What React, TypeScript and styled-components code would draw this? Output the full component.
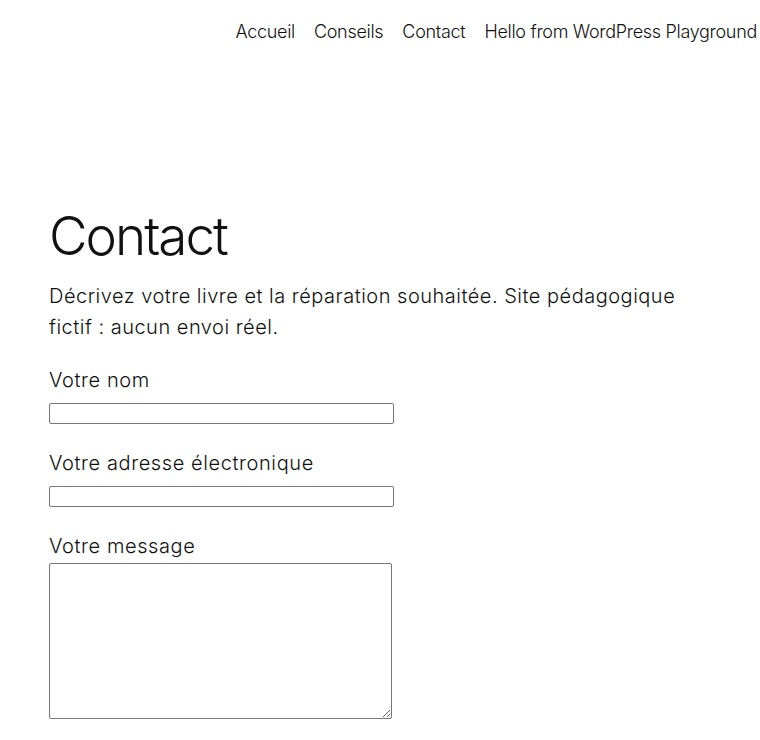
import styled, { createGlobalStyle } from "styled-components";

const GlobalStyle = createGlobalStyle`
  html, body {
    margin: 0;
    padding: 0;
    background: #ffffff;
  }
  body {
    font-family: Inter, "Noto Sans", "Liberation Sans", sans-serif;
    color: #111111;
    overflow-x: hidden;
  }
`;

const Header = styled.header`
  display: flex;
  justify-content: flex-end;
  padding: 20px 3px 0 0;
  height: 60px;
  box-sizing: border-box;
  overflow: hidden;
`;

const NavList = styled.nav`
  display: flex;
  gap: 19px;
  white-space: nowrap;
`;

const NavLink = styled.a`
  font-size: 18px;
  font-weight: 300;
  letter-spacing: -0.3px;
  color: #111111;
  text-decoration: none;
  line-height: 24px;
`;

const Main = styled.main`
  padding: 145px 49px 0;
`;

const Title = styled.h1`
  margin: 0;
  font-size: 53px;
  font-weight: 300;
  letter-spacing: -2px;
  line-height: 1.2;
`;

const Intro = styled.p`
  margin: 12px 0 0;
  max-width: 660px;
  font-size: 20px;
  font-weight: 300;
  letter-spacing: 0.5px;
  line-height: 31px;
`;

const Form = styled.form`
  display: flex;
  flex-direction: column;
  margin-top: 22px;
`;

const Field = styled.div`
  display: flex;
  flex-direction: column;
  align-items: flex-start;
  margin-bottom: ${(p: { $gap?: number }) => p.$gap ?? 24}px;
`;

const Label = styled.label`
  font-size: 20px;
  font-weight: 300;
  letter-spacing: 0.6px;
  line-height: 30px;
  margin-bottom: ${(p: { $space?: number }) => p.$space ?? 8}px;
`;

const TextInput = styled.input`
  width: 345px;
  height: 21px;
  box-sizing: border-box;
  border: 1px solid #767676;
  border-radius: 2px;
  padding: 1px 2px;
  font-size: 13px;
  background: #fff;
`;

const MessageArea = styled.textarea`
  width: 343px;
  height: 156px;
  margin-top: 1px;
  box-sizing: border-box;
  border: 1px solid #767676;
  border-radius: 2px;
  font-size: 13px;
  resize: both;
`;

export default function App() {
  return (
    <>
      <GlobalStyle />
      <Header>
        <NavList>
          <NavLink href="#">Accueil</NavLink>
          <NavLink href="#">Conseils</NavLink>
          <NavLink href="#">Contact</NavLink>
          <NavLink href="#">Hello from WordPress Playground</NavLink>
        </NavList>
      </Header>
      <Main>
        <Title>Contact</Title>
        <Intro>
          Décrivez votre livre et la réparation souhaitée. Site pédagogique
          fictif : aucun envoi réel.
        </Intro>
        <Form>
          <Field>
            <Label htmlFor="nom">Votre nom</Label>
            <TextInput id="nom" type="text" />
          </Field>
          <Field>
            <Label htmlFor="email">Votre adresse électronique</Label>
            <TextInput id="email" type="email" />
          </Field>
          <Field $gap={0}>
            <Label htmlFor="message" $space={1}>
              Votre message
            </Label>
            <MessageArea id="message" />
          </Field>
        </Form>
      </Main>
    </>
  );
}
